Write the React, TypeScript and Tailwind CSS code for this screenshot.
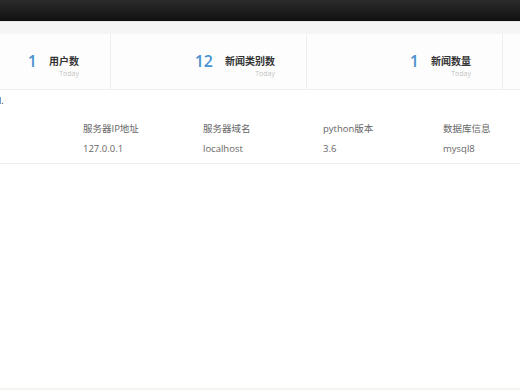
import React from "react";

const stats = [
  { width: "w-[111px]", value: "1", label: "用户数" },
  { width: "w-[196px]", value: "12", label: "新闻类别数" },
  { width: "w-[196px]", value: "1", label: "新闻数量" },
];

const columns = [
  { head: "服务器IP地址", value: "127.0.0.1" },
  { head: "服务器域名", value: "localhost" },
  { head: "python版本", value: "3.6" },
  { head: "数据库信息", value: "mysql8" },
];

const StatCard = ({ width, value, label }: { width: string; value: string; label: string }) => {
  return (
    <div className={`${width} shrink-0 h-full border-r border-[#eeeeee] flex items-start justify-end pr-[31px] pt-[20px]`}>
      <div className="text-[16px] leading-[16px] font-semibold text-[#4a92cf] mr-[12px] -mt-[1px]">{value}</div>
      <div className="flex flex-col items-end">
        <div className="text-[10px] leading-[14px] font-bold text-[#333333]">{label}</div>
        <div className="text-[7px] leading-[10px] text-[#c4c4c4] mt-[1px]">Today</div>
      </div>
    </div>
  );
};

export default function App() {
  return (
    <div
      className="w-[520px] h-[390px] overflow-hidden bg-white flex flex-col"
      style={{ fontFamily: '"Open Sans", "Noto Sans CJK SC", sans-serif' }}
    >
      <div className="h-[22px] shrink-0 bg-gradient-to-b from-[#2c2c2c] to-[#101010] border-b border-[#e6e6e6]"></div>
      <div className="h-[12px] shrink-0 bg-[#f5f5f5]"></div>
      <div className="h-[56px] shrink-0 bg-[#fdfdfd] border-b border-[#efefef] flex">
        {stats.map((s) => (
          <StatCard key={s.label} width={s.width} value={s.value} label={s.label} />
        ))}
        <div className="flex-1 h-full"></div>
      </div>
      <div className="flex-1 flex flex-col">
        <div className="text-[9px] leading-[12px] text-[#333333] pt-[5px] -ml-[1px]">l.</div>
        <div className="mt-[16px] border-b border-[#efefef] pb-[8px]">
          <div className="flex text-[9.5px] leading-[12px] text-[#666666]">
            <div className="w-[83px] shrink-0"></div>
            {columns.map((c) => (
              <div key={c.head} className="w-[120px] shrink-0">
                {c.head}
              </div>
            ))}
          </div>
          <div className="flex text-[9.5px] leading-[12px] text-[#666666] mt-[8px]">
            <div className="w-[83px] shrink-0"></div>
            {columns.map((c) => (
              <div key={c.head} className="w-[120px] shrink-0">
                {c.value}
              </div>
            ))}
          </div>
        </div>
      </div>
      <div className="h-[2px] shrink-0 bg-[#f1f7ee]"></div>
    </div>
  );
}
